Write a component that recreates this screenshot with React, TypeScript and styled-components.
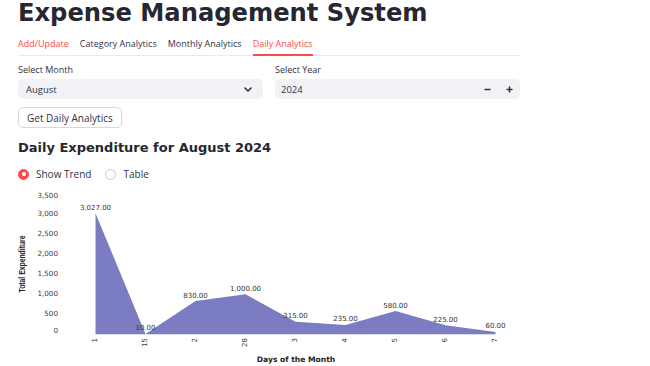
import React from "react";
import styled, { createGlobalStyle } from "styled-components";

const GlobalStyle = createGlobalStyle`
  html, body { margin: 0; padding: 0; background: #ffffff; }
  body { font-family: "Open Sans", "Noto Sans", sans-serif; color: #31333f; }
  * { box-sizing: border-box; }
`;

const Page = styled.main`
  width: 538px;
  padding: 0 18px;
  display: flex;
  flex-direction: column;
`;

const Title = styled.h1`
  margin: 0;
  font-family: "DejaVu Sans", sans-serif;
  font-weight: 700;
  font-size: 24.2px;
  line-height: 26px;
  color: #262730;
`;

const TabList = styled.div`
  margin-top: 10px;
  display: flex;
  gap: 11px;
  border-bottom: 1px solid #e9eaee;
`;

const Tab = styled.div<{ $active?: boolean; $hot?: boolean }>`
  padding: 2px 0 4px;
  margin-bottom: -1px;
  font-size: 9px;
  line-height: 12px;
  white-space: nowrap;
  color: ${(p) => (p.$active || p.$hot ? "#ff4b4b" : "#31333f")};
  border-bottom: 2px solid ${(p) => (p.$active ? "#ff4b4b" : "transparent")};
`;

const FormRow = styled.div`
  margin-top: 8px;
  display: grid;
  grid-template-columns: 1fr 1fr;
  gap: 12px;
`;

const Field = styled.div`
  display: flex;
  flex-direction: column;
  gap: 3px;
`;

const Label = styled.label`
  font-size: 9px;
  line-height: 12px;
  color: #31333f;
`;

const InputBox = styled.div<{ $padL: number; $padR: number }>`
  height: 20px;
  border-radius: 5px;
  background: #f0f2f6;
  display: flex;
  align-items: center;
  padding: 0 ${(p) => p.$padR}px 0 ${(p) => p.$padL}px;
  font-size: 9.5px;
  color: #31333f;
`;

const Value = styled.span`
  flex: 1;
`;

const Chevron = styled.svg`
  margin-right: 3px;
`;

const StepBtn = styled.span`
  width: 22px;
  display: flex;
  justify-content: center;
  align-items: center;
  color: #31333f;
`;

const Button = styled.button`
  margin-top: 8px;
  align-self: flex-start;
  height: 21px;
  display: inline-flex;
  align-items: center;
  padding: 0 8px;
  border: 1px solid #d6d8de;
  border-radius: 5px;
  background: #ffffff;
  font-family: "Open Sans", sans-serif;
  font-size: 10px;
  line-height: 12px;
  color: #31333f;
`;

const SubHeading = styled.h3`
  margin: 12px 0 0;
  font-family: "DejaVu Sans", sans-serif;
  font-weight: 700;
  font-size: 13px;
  line-height: 16px;
  color: #262730;
`;

const RadioRow = styled.div`
  margin-top: 8px;
  height: 20px;
  display: flex;
  align-items: center;
  gap: 14px;
`;

const RadioOption = styled.label`
  display: flex;
  align-items: center;
  gap: 7px;
  font-size: 10px;
  line-height: 20px;
  color: #31333f;
`;

const RadioDot = styled.span<{ $on?: boolean }>`
  width: 11px;
  height: 11px;
  border-radius: 50%;
  display: inline-flex;
  align-items: center;
  justify-content: center;
  background: ${(p) => (p.$on ? "#ff4b4b" : "#ffffff")};
  border: 1px solid ${(p) => (p.$on ? "#ff4b4b" : "#c9ccd4")};
  &::after {
    content: "";
    width: 4px;
    height: 4px;
    border-radius: 50%;
    background: #ffffff;
    display: ${(p) => (p.$on ? "block" : "none")};
  }
`;

const ChartSvg = styled.svg`
  display: block;
  width: 502px;
  height: 182px;
`;

const days = ["1", "15", "2", "28", "3", "4", "5", "6", "7"];
const values = [3027, 10, 830, 1000, 315, 235, 580, 225, 60];
const ticks = [0, 500, 1000, 1500, 2000, 2500, 3000, 3500];

const xAt = (i: number) => 77.5 + 50 * i;
const yAt = (v: number) => 150.3 - 0.04 * v;

const fmt = (v: number) =>
  v.toLocaleString("en-US", { minimumFractionDigits: 2, maximumFractionDigits: 2 });

function Chart() {
  const top = values.map((v, i) => `L${xAt(i)},${yAt(v)}`).join(" ");
  const d = `M${xAt(0)},${yAt(0)} ${top} L${xAt(values.length - 1)},${yAt(0)} Z`;
  return (
    <ChartSvg viewBox="0 0 502 182">
      <path d={d} fill="#7c7cc3" />
      {ticks.map((t) => {
        let y = yAt(t);
        if (t === 0) y -= 3;
        if (t === 3500) y += 2;
        return (
          <text
            key={t}
            x={40}
            y={y}
            textAnchor="end"
            dominantBaseline="middle"
            fontFamily="DejaVu Sans, sans-serif"
            fontSize={7.2}
            fill="#3a3a3a"
          >
            {t.toLocaleString("en-US")}
          </text>
        );
      })}
      <text
        transform="translate(7,80) rotate(-90)"
        textAnchor="middle"
        fontFamily="Liberation Sans, sans-serif"
        fontWeight={700}
        fontSize={8.5}
        textLength={57}
        lengthAdjust="spacingAndGlyphs"
        fill="#222"
      >
        Total Expenditure
      </text>
      {values.map((v, i) => (
        <text
          key={`v${i}`}
          x={xAt(i)}
          y={yAt(v) - 3.5}
          textAnchor="middle"
          fontFamily="DejaVu Sans, sans-serif"
          fontSize={7}
          fill="#333"
        >
          {fmt(v)}
        </text>
      ))}
      {days.map((d, i) => (
        <text
          key={`d${i}`}
          transform={`translate(${xAt(i)},154) rotate(-90)`}
          textAnchor="end"
          dominantBaseline="middle"
          fontFamily="DejaVu Sans, sans-serif"
          fontSize={7}
          fill="#3a3a3a"
        >
          {d}
        </text>
      ))}
      <text
        x={278}
        y={178.3}
        textAnchor="middle"
        fontFamily="DejaVu Sans, sans-serif"
        fontWeight={700}
        fontSize={7.6}
        fill="#222"
      >
        Days of the Month
      </text>
    </ChartSvg>
  );
}

export default function App() {
  return (
    <>
      <GlobalStyle />
      <Page>
        <Title>Expense Management System</Title>
        <TabList>
          <Tab $hot>Add/Update</Tab>
          <Tab>Category Analytics</Tab>
          <Tab>Monthly Analytics</Tab>
          <Tab $active>Daily Analytics</Tab>
        </TabList>
        <FormRow>
          <Field>
            <Label>Select Month</Label>
            <InputBox $padL={8} $padR={8}>
              <Value>August</Value>
              <Chevron width="8" height="5" viewBox="0 0 8 5">
                <path d="M1 1 L4 4 L7 1" fill="none" stroke="#31333f" strokeWidth="1.6" strokeLinecap="round" strokeLinejoin="round" />
              </Chevron>
            </InputBox>
          </Field>
          <Field>
            <Label>Select Year</Label>
            <InputBox $padL={6} $padR={0}>
              <Value>2024</Value>
              <StepBtn>
                <svg width="7" height="7" viewBox="0 0 7 7">
                  <path d="M1 3.5 H6" stroke="#31333f" strokeWidth="1.5" strokeLinecap="round" />
                </svg>
              </StepBtn>
              <StepBtn>
                <svg width="7" height="7" viewBox="0 0 7 7">
                  <path d="M1 3.5 H6 M3.5 1 V6" stroke="#31333f" strokeWidth="1.5" strokeLinecap="round" />
                </svg>
              </StepBtn>
            </InputBox>
          </Field>
        </FormRow>
        <Button>Get Daily Analytics</Button>
        <SubHeading>Daily Expenditure for August 2024</SubHeading>
        <RadioRow>
          <RadioOption>
            <RadioDot $on />
            Show Trend
          </RadioOption>
          <RadioOption>
            <RadioDot />
            Table
          </RadioOption>
        </RadioRow>
        <Chart />
      </Page>
    </>
  );
}
